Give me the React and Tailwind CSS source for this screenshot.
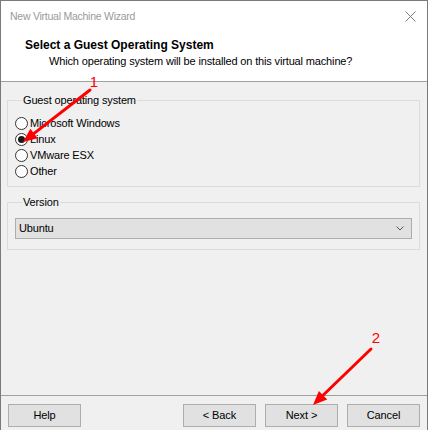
import React from 'react';

const font = { fontFamily: '"Liberation Sans", Arial, sans-serif' };

function Radio({ label, checked }) {
  return (
    <div className="flex items-center h-[16px]">
      <span className="w-[13px] h-[13px] rounded-full border border-[#333] bg-white flex items-center justify-center shrink-0">
        {checked && <span className="w-[7px] h-[7px] rounded-full bg-[#1a1a1a]" />}
      </span>
      <span className="ml-[2px] text-[11px] tracking-[-0.15px] leading-[16px] text-black">{label}</span>
    </div>
  );
}

function Button({ children }) {
  return (
    <button className="w-[73px] h-[23px] bg-[#e1e1e1] border border-[#adadad] text-[11px] tracking-[-0.1px] text-black leading-none">
      {children}
    </button>
  );
}

function Arrow({ x1, y1, x2, y2 }) {
  const a = Math.atan2(y2 - y1, x2 - x1);
  const len = 14, w = 6;
  const bx = x2 - len * Math.cos(a), by = y2 - len * Math.sin(a);
  const p1 = `${bx + w * Math.sin(a)},${by - w * Math.cos(a)}`;
  const p2 = `${bx - w * Math.sin(a)},${by + w * Math.cos(a)}`;
  return (
    <g>
      <line x1={x1} y1={y1} x2={bx} y2={by} stroke="#f00" strokeWidth="3" strokeLinecap="round" />
      <polygon points={`${x2},${y2} ${p1} ${p2}`} fill="#f00" />
    </g>
  );
}

export default function App() {
  return (
    <div className="relative w-[428px] h-[430px] bg-[#f0f0f0] border-t border-l border-r border-[#7a7a7a] flex flex-col overflow-hidden" style={font}>
      {/* title + header */}
      <div className="bg-white h-[81px] border-b border-[#a0a0a0] flex flex-col shrink-0">
        <div className="h-[31px] flex items-center justify-between pl-[9px] pr-[10px]">
          <span className="text-[10.5px] tracking-[-0.25px] text-[#9a9a9a]">New Virtual Machine Wizard</span>
          <svg width="11" height="11" viewBox="0 0 11 11" className="mr-[1px]">
            <path d="M0.5 0.5 L10.5 10.5 M10.5 0.5 L0.5 10.5" stroke="#7a7a7a" strokeWidth="1" />
          </svg>
        </div>
        <div className="pl-[24px] pt-[5px]">
          <div className="text-[12px] font-bold text-black leading-[16px]">Select a Guest Operating System</div>
          <div className="pl-[24px] text-[11px] tracking-[-0.15px] text-black leading-[16px]">Which operating system will be installed on this virtual machine?</div>
        </div>
      </div>

      {/* body */}
      <div className="flex-1 flex flex-col px-[6px] pt-[10px]">
        <fieldset className="border border-[#dcdcdc] px-[7px] pt-[7px] pb-[7px] w-[413px]">
          <legend className="ml-[7px] px-[1px] text-[11px] tracking-[-0.15px] leading-[16px] text-black">Guest operating system</legend>
          <Radio label="Microsoft Windows" />
          <Radio label="Linux" checked />
          <Radio label="VMware ESX" />
          <Radio label="Other" />
        </fieldset>

        <fieldset className="mt-[7px] border border-[#dcdcdc] px-[7px] pt-[8px] pb-[10px] w-[413px]">
          <legend className="ml-[7px] px-[1px] text-[11px] tracking-[-0.15px] leading-[16px] text-black">Version</legend>
          <div className="h-[21px] bg-[#e1e1e1] border border-[#adadad] flex items-center justify-between pl-[3px] pr-[7px]">
            <span className="text-[11px] tracking-[-0.15px] text-black">Ubuntu</span>
            <svg width="8" height="5" viewBox="0 0 8 5">
              <path d="M0.5 0.5 L4 4 L7.5 0.5" stroke="#555" strokeWidth="1" fill="none" />
            </svg>
          </div>
        </fieldset>
      </div>

      {/* footer */}
      <div className="h-[35px] border-t border-[#a0a0a0] flex items-start pt-[8px] pl-[7px] pr-[7px] shrink-0">
        <Button>Help</Button>
        <div className="flex-1" />
        <div className="flex gap-[9px]">
          <Button>&lt; Back</Button>
          <Button>Next &gt;</Button>
          <Button>Cancel</Button>
        </div>
      </div>

      {/* annotations */}
      <svg className="absolute inset-0 pointer-events-none" width="428" height="430">
        <text x="93" y="86" fill="#f00" fontSize="15" textAnchor="middle" fontFamily="Liberation Sans, sans-serif">1</text>
        <Arrow x1={89} y1={89} x2={22} y2={141} />
        <text x="375" y="342" fill="#f00" fontSize="15" textAnchor="middle" fontFamily="Liberation Sans, sans-serif">2</text>
        <Arrow x1={370} y1={348} x2={312} y2={404} />
      </svg>
    </div>
  );
}
